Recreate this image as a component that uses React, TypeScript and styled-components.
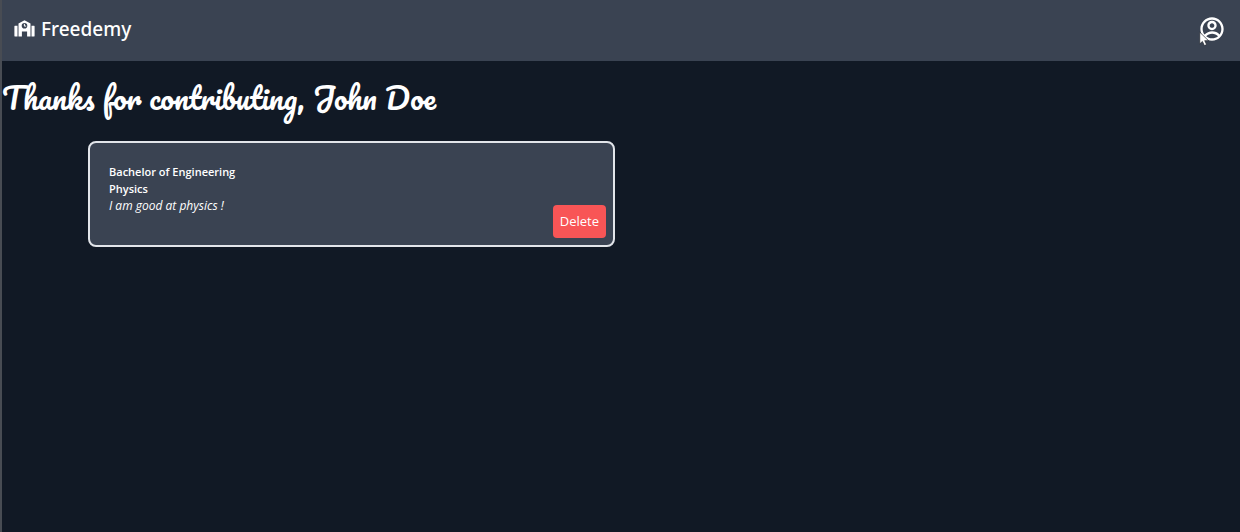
import React from "react";
import styled, { createGlobalStyle } from "styled-components";
import { RiAccountCircleLine } from "react-icons/ri";

const GlobalStyle = createGlobalStyle`
  *, *::before, *::after { box-sizing: border-box; }
  body {
    margin: 0;
    background: #111925;
    color: #fff;
    font-family: "Segoe UI", "Noto Sans", sans-serif;
  }
`;

const Page = styled.div`
  min-height: 100vh;
  border-left: 2px solid #484c53;
`;

const Header = styled.header`
  display: flex;
  align-items: center;
  justify-content: space-between;
  height: 61px;
  padding: 0 14px 4px 12px;
  background: #3a4352;
`;

const Brand = styled.a`
  display: flex;
  align-items: center;
  gap: 6px;
  color: #fff;
  font-size: 19px;
  font-weight: 500;
  line-height: 28px;
  text-decoration: none;
`;

const AccountButton = styled.button`
  position: relative;
  display: flex;
  padding: 0;
  border: 0;
  background: none;
  color: #fff;
  cursor: pointer;
`;

const Pointer = styled.svg`
  position: absolute;
  top: 16px;
  left: 1px;
`;

const Greeting = styled.h1`
  margin: 17px 0 0;
  font-family: Pacifico, cursive;
  font-size: 30px;
  font-weight: 400;
  line-height: 40px;
`;

const Contributions = styled.main`
  display: grid;
  grid-template-columns: repeat(2, minmax(0, 1fr));
  gap: 12px;
  padding: 23px 86px;
`;

const Card = styled.article`
  display: flex;
  justify-content: space-between;
  min-height: 106px;
  padding: 20px 7px 7px 19px;
  border: 2px solid #e2e5ea;
  border-radius: 8px;
  background: #3a4352;
  font-family: "Segoe UI", "Open Sans", "Noto Sans", sans-serif;
  font-size: 12px;
  line-height: 17px;
`;

const CardText = styled.div`
  p, h2 { margin: 0; }
`;

const Course = styled.h2`
  font-size: 11px;
  font-weight: 600;
`;

const Description = styled.p`
  font-style: italic;
`;

const DeleteButton = styled.button`
  align-self: flex-end;
  height: 33px;
  padding: 0 7px;
  border: 0;
  border-radius: 4px;
  background: #f85556;
  color: #fff;
  font: inherit;
  font-size: 13px;
  cursor: pointer;
`;

function SchoolLogo() {
  return (
    <svg width="21" height="18" viewBox="0 0 21 18" fill="#fff" aria-hidden="true">
      <path d="M.9 5.8h2.6V16.6H1.3Q.4 16.6.4 15.7V6.4Q.4 5.8.9 5.8ZM17.5 5.8h2.6q.5 0 .5.6v9.3q0 .9-.9.9h-2.2Z" />
      <path fillRule="evenodd" d="M10.5.2 16.5 3.4V16.6h-3.4v-5H7.9v5H4.5V3.4ZM10.5 3a2.8 2.8 0 1 0 0 5.6a2.8 2.8 0 0 0 0-5.6Z" />
      <path d="M10.4 3.9v2.2h1.8" fill="none" stroke="#fff" strokeWidth="1" />
    </svg>
  );
}

export default function App() {
  return (
    <>
      <GlobalStyle />
      <Page>
        <Header>
          <Brand href="#">
            <SchoolLogo />
            Freedemy
          </Brand>
          <AccountButton aria-label="Account">
            <RiAccountCircleLine size={28} />
            <Pointer width="11" height="16" viewBox="0 0 10 14" aria-hidden="true">
              <path d="M.7.8V11.4L3.1 9.2 4.9 13 6.9 12.1 5.2 8.5H8.6Z" fill="#fff" stroke="#20242c" strokeWidth=".6" />
            </Pointer>
          </AccountButton>
        </Header>
        <Greeting>Thanks for contributing, John Doe</Greeting>
        <Contributions>
          <Card>
            <CardText>
              <Course>Bachelor of Engineering</Course>
              <Course>Physics</Course>
              <Description>I am good at physics !</Description>
            </CardText>
            <DeleteButton>Delete</DeleteButton>
          </Card>
        </Contributions>
      </Page>
    </>
  );
}
